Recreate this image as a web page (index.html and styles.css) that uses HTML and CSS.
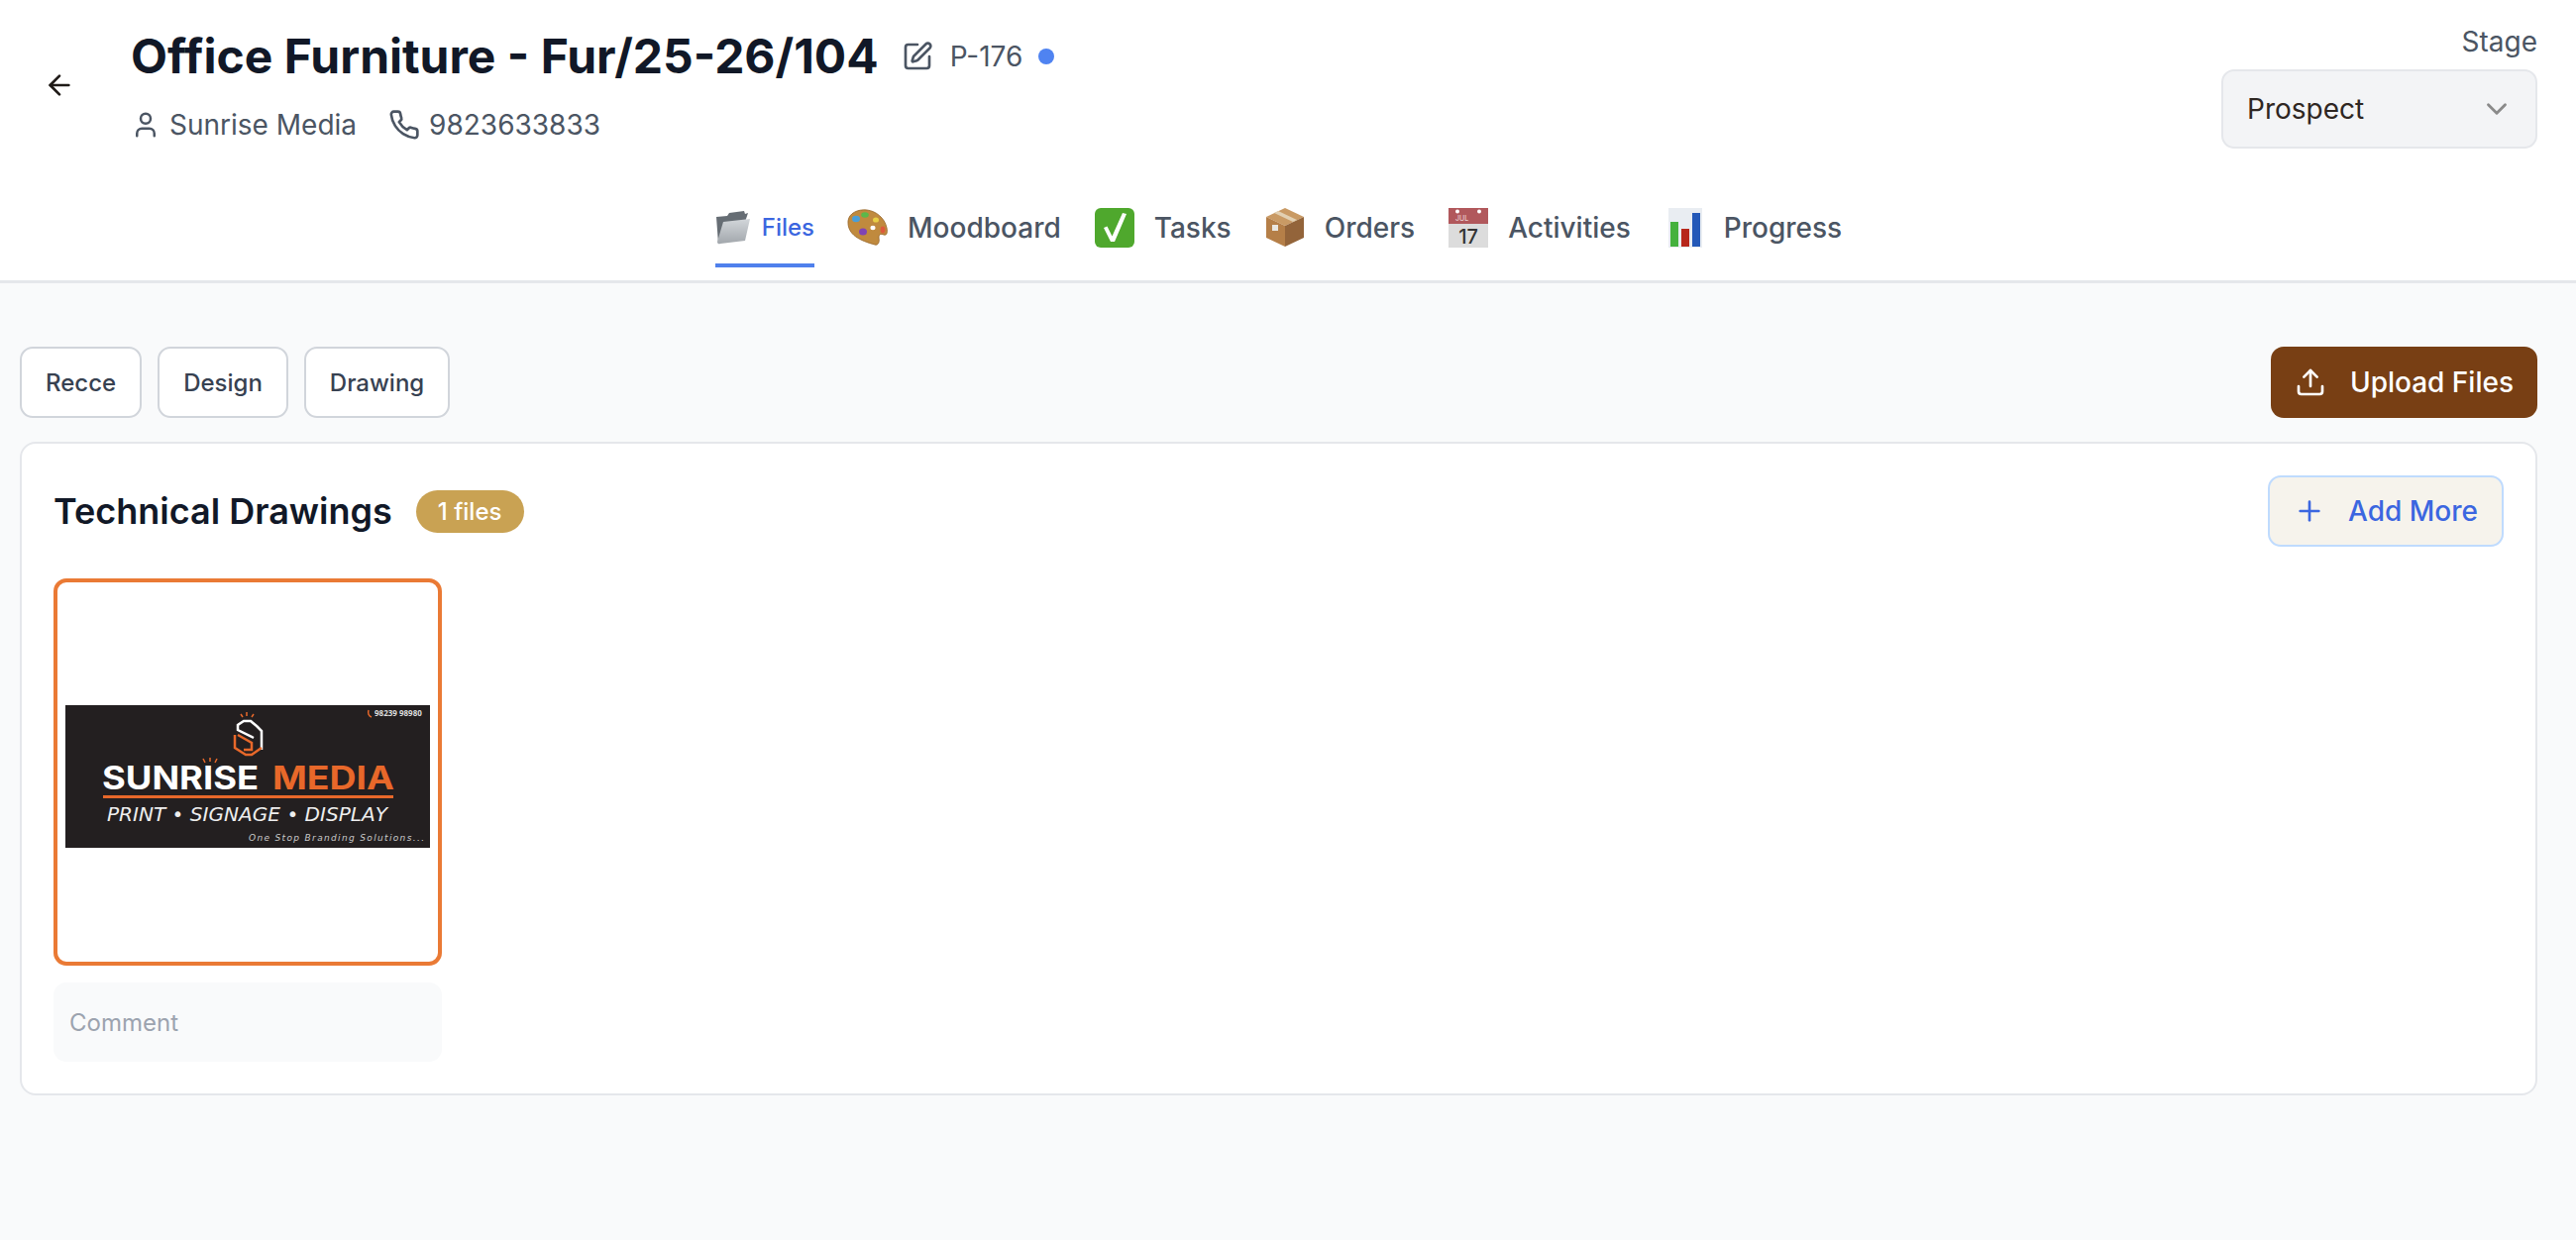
FILE: index.html
```html
<!DOCTYPE html>
<html lang="en">
<head>
<meta charset="utf-8">
<title>Office Furniture - Fur/25-26/104</title>
<link rel="stylesheet" href="styles.css">
</head>
<body>
<header class="header">
  <div class="head-top">
    <button class="back" aria-label="Back">
      <svg class="ico-back" viewBox="0 0 24 24"><path d="m12 19-7-7 7-7"/><path d="M19 12H5"/></svg>
    </button>
    <div class="head-info">
      <div class="title-row">
        <h1 class="title">Office Furniture - Fur/25-26/104</h1>
        <svg class="ico-edit" viewBox="0 0 24 24"><path d="M12 3H5a2 2 0 0 0-2 2v14a2 2 0 0 0 2 2h14a2 2 0 0 0 2-2v-7"/><path d="M18.375 2.625a1 1 0 0 1 3 3l-9.013 9.014a2 2 0 0 1-.853.505l-2.873.84a.5.5 0 0 1-.62-.62l.84-2.873a2 2 0 0 1 .506-.852z"/></svg>
        <span class="code">P-176</span>
        <span class="dot"></span>
      </div>
      <div class="meta-row">
        <span class="meta">
          <svg class="ico-meta" viewBox="0 0 24 24"><path d="M19 21v-2a4 4 0 0 0-4-4H9a4 4 0 0 0-4 4v2"/><circle cx="12" cy="7" r="4"/></svg>
          Sunrise Media
        </span>
        <span class="meta">
          <svg class="ico-meta ico-phone" viewBox="0 0 24 24"><path d="M22 16.92v3a2 2 0 0 1-2.18 2 19.79 19.79 0 0 1-8.63-3.07 19.5 19.5 0 0 1-6-6 19.79 19.79 0 0 1-3.07-8.67A2 2 0 0 1 4.11 2h3a2 2 0 0 1 2 1.72 12.84 12.84 0 0 0 .7 2.81 2 2 0 0 1-.45 2.11L8.09 9.91a16 16 0 0 0 6 6l1.27-1.27a2 2 0 0 1 2.11-.45 12.84 12.84 0 0 0 2.81.7A2 2 0 0 1 22 16.92z"/></svg>
          9823633833
        </span>
      </div>
    </div>
    <div class="stage">
      <span class="stage-label">Stage</span>
      <div class="select">
        <span>Prospect</span>
        <svg class="ico-chev" viewBox="0 0 24 24"><path d="m6 9 6 6 6-6"/></svg>
      </div>
    </div>
  </div>
  <nav class="tabs">
    <a class="tab tab-active">
      <svg class="emoji emoji-folder" viewBox="0 0 36 36">
        <defs><linearGradient id="fold" x1="0" y1="0" x2="0" y2="1"><stop offset="0" stop-color="#d2d6da"/><stop offset="1" stop-color="#a2a7ac"/></linearGradient></defs>
        <path d="M1 8l11-1 2-3 15-2 1 3 3-1-4 12L5 34l-2 1z" fill="#666d74"/>
        <path d="M8 13l27-3-5 22-25 3a2 2 0 0 1-3-2z" fill="url(#fold)"/>
      </svg>
      <span>Files</span>
    </a>
    <a class="tab">
      <svg class="emoji" viewBox="0 0 42 42">
        <path d="M1 14C2 6 11 2 20 3c9 1 18 8 20 18 1 5 0 8-3 7-3-1-5-1-5 3 1 5-1 8-4 7C13 34 0 28 1 14z" fill="#c08a3e" stroke="#95652a" stroke-width=".8"/>
        <ellipse cx="9" cy="12" rx="4" ry="3.200" fill="#4a9fd8"/>
        <ellipse cx="18" cy="8" rx="3.800" ry="2.800" fill="#5bb84a"/>
        <ellipse cx="29" cy="13" rx="3" ry="2.600" fill="#e8cf45"/>
        <ellipse cx="16" cy="25" rx="4" ry="3.600" fill="#7f43b5"/>
        <ellipse cx="36" cy="23" rx="2.400" ry="3.400" fill="#dd5a3c"/>
        <ellipse cx="26" cy="21" rx="2.600" ry="2.200" fill="#fff"/>
      </svg>
      <span>Moodboard</span>
    </a>
    <a class="tab">
      <svg class="emoji" viewBox="0 0 42 42">
        <rect x="1" y="1" width="40" height="40" rx="6" fill="#4fa82d"/>
        <path d="M10 21l3.500-1.500 5 10L29 6l4 1-12 28h-4z" fill="#fff"/>
      </svg>
      <span>Tasks</span>
    </a>
    <a class="tab">
      <svg class="emoji" viewBox="-2 -1 42 42">
        <path d="M19 0l19 9-19 9L0 9z" fill="#c99a64"/>
        <path d="M0 9l19 9v21L0 30z" fill="#b57f48"/>
        <path d="M38 9l-19 9v21l19-9z" fill="#93643a"/>
        <path d="M8 5l19 9 4-2L12 3z" fill="#e2d0b2"/>
        <rect x="6" y="17" width="6" height="6" fill="#e9e6e0"/>
      </svg>
      <span>Orders</span>
    </a>
    <a class="tab">
      <svg class="emoji" viewBox="0 -1 40 42">
        <rect x="0" y="0" width="40" height="40" fill="#dcdcdc"/>
        <rect x="0" y="0" width="40" height="16" fill="#b1585c"/>
        <circle cx="9" cy="3.500" r="2" fill="#fff"/>
        <circle cx="31" cy="3.500" r="2" fill="#fff"/>
        <text class="cal-month" x="7" y="13">JUL</text>
        <text class="cal-day" x="20" y="36">17</text>
      </svg>
      <span>Activities</span>
    </a>
    <a class="tab">
      <svg class="emoji" viewBox="-5 -1 42 42">
        <rect x="0" y="0" width="34" height="40" fill="#e9edf2"/>
        <rect x="2" y="14" width="8" height="25" fill="#45b13d"/>
        <rect x="13" y="21" width="8" height="18" fill="#b7271b"/>
        <rect x="24" y="5" width="8" height="34" fill="#2358b8"/>
      </svg>
      <span>Progress</span>
    </a>
  </nav>
</header>

<main class="main">
  <div class="toolbar">
    <div class="chips">
      <button class="chip">Recce</button>
      <button class="chip">Design</button>
      <button class="chip">Drawing</button>
    </div>
    <button class="upload">
      <svg class="ico-btn" viewBox="0 0 24 24"><path d="M21 15v4a2 2 0 0 1-2 2H5a2 2 0 0 1-2-2v-4"/><polyline points="17 8 12 3 7 8"/><line x1="12" y1="3" x2="12" y2="15"/></svg>
      Upload Files
    </button>
  </div>

  <section class="card">
    <div class="card-head">
      <div class="card-title">
        <h2 class="section-title">Technical Drawings</h2>
        <span class="badge">1 files</span>
      </div>
      <button class="add">
        <svg class="ico-btn" viewBox="0 0 24 24"><path d="M5 12h14"/><path d="M12 5v14"/></svg>
        Add More
      </button>
    </div>
    <div class="file">
      <div class="thumb">
        <svg class="logo" viewBox="0 0 368 144">
          <rect width="368" height="144" fill="#231f20"/>
          <path class="logo-rays" d="M177 9l2 3M183 7v4M190 9l-2 3M139 54l2 4M146 53v4M153 54l-2 4"/>
          <path class="logo-white" d="M193 21l-6-5h-7l-6 4v5l16 8M193 21l5 5v19"/>
          <path class="logo-orange-line" d="M171 30v13l11 7h6l10-7M174 30l14 8v7h-8"/>
          <text class="logo-phone" x="312" y="11">98239 98980</text>
          <path class="logo-orange-line logo-thin" d="M306 5c-1 3 0 6 3 7"/>
          <text class="logo-big" x="37" y="85" textLength="158" lengthAdjust="spacingAndGlyphs">SUNRISE</text>
          <text class="logo-big logo-orange" x="209" y="85" textLength="123" lengthAdjust="spacingAndGlyphs">MEDIA</text>
          <rect x="38" y="91" width="293" height="3" fill="#e8682a"/>
          <text class="logo-tag" x="42" y="117" textLength="283" lengthAdjust="spacingAndGlyphs">PRINT • SIGNAGE • DISPLAY</text>
          <text class="logo-sub" x="185" y="137" textLength="177" lengthAdjust="spacing">One Stop Branding Solutions...</text>
        </svg>
      </div>
      <div class="comment">Comment</div>
    </div>
  </section>
</main>
</body>
</html>
```
FILE: styles.css
```css
* { box-sizing: border-box; }
html, body { margin: 0; padding: 0; }
body {
  min-height: 1252px;
  background: #f9fafb;
  font-family: Inter, "Liberation Sans", sans-serif;
  color: #111827;
}
button { font-family: inherit; cursor: pointer; white-space: nowrap; }
svg { display: block; flex: none; }

.header {
  height: 286px;
  background: #fff;
  border-bottom: 3px solid #e5e7eb;
  display: flex;
  flex-direction: column;
}
.head-top {
  display: flex;
  align-items: flex-start;
  padding: 24px 39px 0 44px;
  height: 190px;
}
.back {
  width: 32px;
  height: 32px;
  margin-top: 46px;
  padding: 0;
  border: 0;
  background: none;
}
.ico-back { width: 32px; height: 32px; fill: none; stroke: #1f1a17; stroke-width: 2; stroke-linecap: round; stroke-linejoin: round; }
.head-info { margin-left: 56px; flex: 1; }
.title-row { display: flex; align-items: center; height: 66px; }
.title { margin: 0; font-size: 48px; font-weight: 700; line-height: 66px; color: #111827; }
.ico-edit { width: 32px; height: 32px; margin-left: 23px; fill: none; stroke: #4b5563; stroke-width: 2; stroke-linecap: round; stroke-linejoin: round; }
.code { margin-left: 17px; font-size: 28px; color: #4b5563; }
.dot { width: 16px; height: 16px; margin-left: 16px; border-radius: 50%; background: #4f83f1; }
.meta-row { display: flex; align-items: center; gap: 32px; margin-top: 16px; }
.meta { display: flex; align-items: center; gap: 9px; font-size: 28px; line-height: 40px; color: #4b5563; }
.ico-meta { width: 30px; height: 30px; fill: none; stroke: #4b5563; stroke-width: 2; stroke-linecap: round; stroke-linejoin: round; }
.ico-phone { width: 32px; height: 32px; }
.stage { width: 319px; display: flex; flex-direction: column; align-items: flex-end; }
.stage-label { font-size: 28px; line-height: 36px; color: #4b5563; margin-bottom: 10px; }
.select {
  width: 100%;
  height: 80px;
  padding: 0 22px 0 24px;
  display: flex;
  align-items: center;
  justify-content: space-between;
  background: #f3f4f6;
  border: 2px solid #e5e7eb;
  border-radius: 13px;
  font-size: 28px;
  color: #2e2622;
}
.ico-chev { width: 34px; height: 34px; fill: none; stroke: #8a8a8a; stroke-width: 2; stroke-linecap: round; stroke-linejoin: round; }

.tabs { display: flex; justify-content: center; gap: 33px; padding-right: 19px; height: 80px; }
.tab {
  display: flex;
  align-items: center;
  gap: 19px;
  height: 80px;
  font-size: 28px;
  font-weight: 500;
  color: #4b5563;
}
.tab-active { gap: 11px; padding-top: 2px; font-size: 24px; color: #3b66e0; border-bottom: 4px solid #4f80ec; }
.emoji { width: 42px; height: 42px; }
.emoji-folder { width: 36px; height: 36px; }
.cal-month { font-family: Inter, sans-serif; font-size: 7px; fill: #e9cfcf; }
.cal-day { font-family: Inter, sans-serif; font-size: 20px; fill: #333; text-anchor: middle; }

.main { padding: 64px 39px 0 20px; }
.toolbar { display: flex; justify-content: space-between; align-items: center; }
.chips { display: flex; gap: 16px; }
.chip {
  height: 72px;
  padding: 0 24px;
  background: #fff;
  border: 2px solid #d1d5db;
  border-radius: 13px;
  font-size: 24px;
  font-weight: 500;
  color: #374151;
}
.upload {
  height: 72px;
  display: flex;
  align-items: center;
  gap: 24px;
  padding: 0 24px;
  background: #783f14;
  border: 0;
  border-radius: 13px;
  font-size: 28px;
  font-weight: 500;
  color: #fff;
}
.ico-btn { width: 32px; height: 32px; fill: none; stroke: currentColor; stroke-width: 2; stroke-linecap: round; stroke-linejoin: round; }

.card {
  margin-top: 24px;
  height: 660px;
  padding: 32px 32px 0;
  background: #fff;
  border: 2px solid #e5e7eb;
  border-radius: 16px;
}
.card-head { display: flex; justify-content: space-between; align-items: center; height: 72px; }
.card-title { display: flex; align-items: center; gap: 24px; }
.section-title { margin: 0; font-size: 36px; font-weight: 600; color: #111827; }
.badge {
  height: 43px;
  padding: 0 23px 0 22px;
  display: flex;
  align-items: center;
  background: #c9a253;
  border-radius: 22px;
  font-size: 24px;
  font-weight: 500;
  color: #fff;
}
.add {
  height: 72px;
  display: flex;
  align-items: center;
  gap: 23px;
  padding: 0 24px;
  background: #f6f3ec;
  border: 2px solid #bfdbfe;
  border-radius: 13px;
  font-size: 28px;
  font-weight: 500;
  color: #3b66e0;
}
.file { width: 392px; margin-top: 32px; }
.thumb {
  height: 391px;
  padding-top: 9px;
  display: flex;
  align-items: center;
  justify-content: center;
  border: 4px solid #ea7a35;
  border-radius: 13px;
}
.logo { width: 368px; height: 144px; }
.logo-rays { fill: none; stroke: #e8682a; stroke-width: 1.500; }
.logo-white { fill: none; stroke: #fff; stroke-width: 2.500; }
.logo-orange-line { fill: none; stroke: #e8682a; stroke-width: 2.500; }
.logo-thin { stroke-width: 1.500; }
.logo-phone { font-family: "Open Sans", sans-serif; font-size: 8px; font-weight: 700; fill: #ddd; }
.logo-big { font-family: Inter, sans-serif; font-size: 32px; font-weight: 700; fill: #fff; }
.logo-orange { fill: #e8682a; }
.logo-tag { font-family: "DejaVu Sans", sans-serif; font-size: 20px; font-style: italic; fill: #eee; }
.logo-sub { font-family: "DejaVu Sans", sans-serif; font-size: 9px; font-style: italic; fill: #ccc; }
.comment {
  height: 80px;
  margin-top: 17px;
  padding: 0 16px;
  display: flex;
  align-items: center;
  background: #f9fafb;
  border-radius: 13px;
  font-size: 24px;
  color: #9ca3af;
}
```
